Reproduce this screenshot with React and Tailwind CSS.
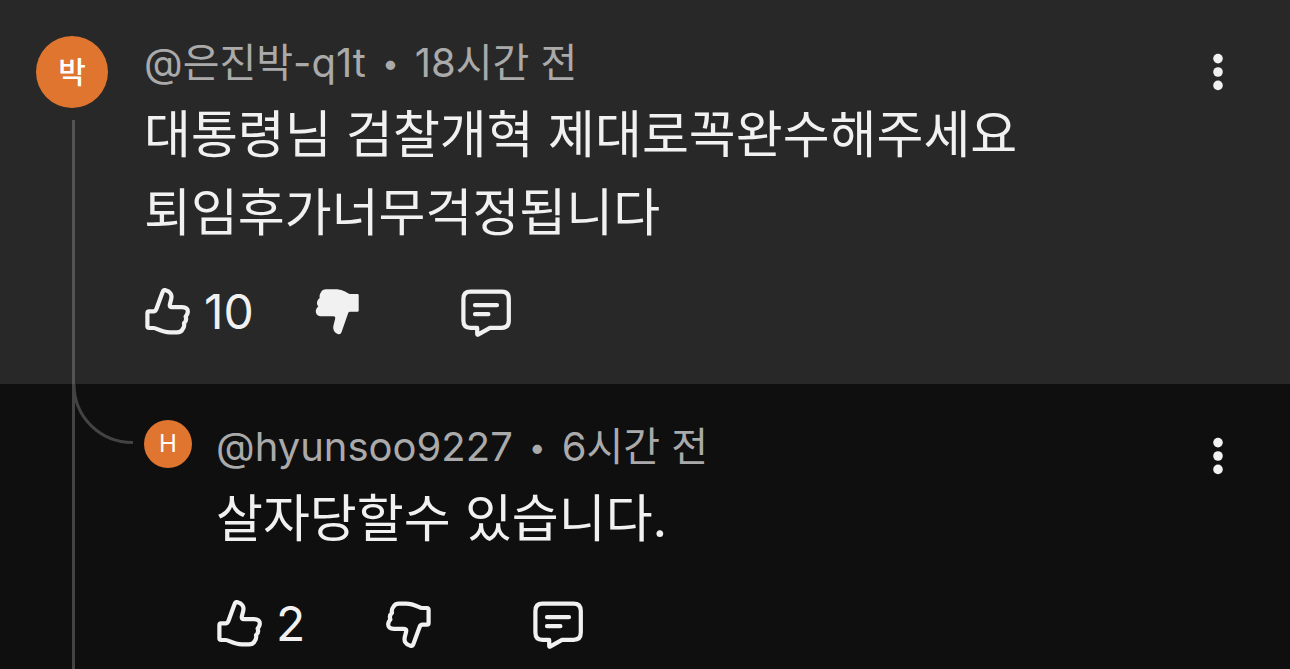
const comments = [
  {
    id: 1,
    initial: '박',
    author: '@은진박-q1t',
    time: '18시간 전',
    lines: ['대통령님 검찰개혁 제대로꼭완수해주세요', '퇴임후가너무걱정됩니다'],
    likes: 10,
    disliked: true,
  },
  {
    id: 2,
    initial: 'H',
    author: '@hyunsoo9227',
    time: '6시간 전',
    lines: ['살자당할수 있습니다.'],
    likes: 2,
    disliked: false,
  },
]

function ThumbIcon({ down = false }) {
  return (
    <svg
      className={`size-12 shrink-0 ${down ? 'rotate-180' : ''}`}
      viewBox="0 0 48 48"
      fill="none"
      stroke="currentColor"
      strokeWidth="4.2"
      strokeLinejoin="round"
      aria-hidden="true"
    >
      <path d="M5 23.3H9.5Q11.6 23.3 12.4 21L18.6 4Q19.4 1.6 21.6 2.2C26.4 3.4 28.2 7 27.2 11L25.9 16.2Q25.2 19.2 28 19.2H38C42 19.2 44 21 43.8 24C43.6 26.4 42.8 27.2 41.6 28.6C42.6 31.2 42 33.6 40 35.2C40.6 37.4 40 39.4 38.6 41.2C37.4 43.6 35.6 44.4 33 44.4H26C21 44.4 17.4 43 13.4 41.2Q11.6 40 9.6 40H5Q3.4 40 3.4 38.4V25Q3.4 23.3 5 23.3Z" />
    </svg>
  )
}

function ThumbDownFilledIcon() {
  return (
    <svg className="size-12 shrink-0" viewBox="0 0 48 48" fill="currentColor" aria-hidden="true">
      <path d="M14 1.3H23C30 1.3 33 3.6 36.500 5.4Q37.8 6 39 6H45.500Q46.7 6 46.7 7.2V22.4Q46.7 23.7 45.500 23.7H38Q36.7 23.7 36.2 25L29.6 44Q28.8 46.600 26.6 46.3C22.6 45.2 20.6 41.8 21.4 37.8L23.1 31Q23.8 28.3 21.4 28.3H9.500C6 28.3 3.8 26.3 3.8 23.3C3.8 21.2 4.700 19.900 6.3 18.4C4.3 16 4.5 12.4 7.700 9.900C7.200 7.900 7.8 6 9 4.200C10 2.200 11.600 1.3 14 1.3Z" />
    </svg>
  )
}

function ReplyIcon() {
  return (
    <svg
      className="h-[50px] w-[52px]"
      viewBox="0 0 52 50"
      fill="none"
      stroke="currentColor"
      strokeWidth="4.2"
      strokeLinecap="round"
      strokeLinejoin="round"
      aria-hidden="true"
    >
      <path d="M10.5 3.6H41.5Q48.8 3.6 48.8 10.9V32.6Q48.8 39.9 41.5 39.9H30L18 46.6Q17.2 46.8 17.2 46V39.9H10.5Q3.4 39.9 3.4 32.6V10.9Q3.4 3.6 10.5 3.6Z" />
      <path d="M15 17.2H37M15 26.2H28.4" />
    </svg>
  )
}

function Avatar({ initial, small = false }) {
  return (
    <div
      className={`flex shrink-0 items-center justify-center rounded-full bg-[#df752f] text-white ${
        small ? 'size-12 text-2xl' : 'size-[72px] text-3xl font-medium'
      }`}
    >
      {initial}
    </div>
  )
}

function MenuButton() {
  return (
    <button type="button" aria-label="메뉴" className="flex h-[72px] w-12 shrink-0 items-center justify-center">
      <svg className="h-10 w-3" viewBox="0 0 12 40" fill="currentColor" aria-hidden="true">
        <circle cx="6" cy="6.6" r="4.8" />
        <circle cx="6" cy="20" r="4.8" />
        <circle cx="6" cy="33.4" r="4.8" />
      </svg>
    </button>
  )
}

function CommentContent({ comment, reply = false }) {
  return (
    <div className="min-w-0 flex-1">
      <p className="flex items-center gap-4 text-[40px] leading-[54px] text-[#aaaaaa]">
        <span>{comment.author}</span>
        <span className="text-3xl">•</span>
        <span>{comment.time}</span>
      </p>
      <p className="mt-1.5 text-[51px] leading-[78px]">
        {comment.lines.map(line => (
          <span key={line} className="block">{line}</span>
        ))}
      </p>
      <div className={`grid grid-cols-[168px_148px_auto] justify-start ${reply ? 'mt-[42px]' : 'mt-9'}`}>
        <button type="button" aria-label={`좋아요 ${comment.likes}`} className="flex h-12 items-center gap-3">
          <ThumbIcon />
          <span className="text-5xl leading-[50px]">{comment.likes}</span>
        </button>
        <button type="button" aria-label="싫어요" aria-pressed={comment.disliked} className="flex h-12 items-center">
          {comment.disliked ? <ThumbDownFilledIcon /> : <ThumbIcon down />}
        </button>
        <button type="button" aria-label="답글" className="flex h-12 items-start">
          <ReplyIcon />
        </button>
      </div>
    </div>
  )
}

export default function App() {
  const [parent, reply] = comments

  return (
    <main className="flex min-h-screen flex-col bg-[#0f0f0f] font-['Inter','Noto_Sans_CJK_KR',sans-serif] text-[#f1f1f1]">
      <article className="flex bg-[#282828] pr-12 pl-9">
        <div className="mr-9 flex flex-col items-center pt-9">
          <Avatar initial={parent.initial} />
          {/* thread line */}
          <div className="mt-3 ml-[3px] w-[3px] flex-1 bg-[#535353]" />
        </div>
        <div className="flex min-w-0 flex-1 pt-9 pb-12">
          <CommentContent comment={parent} />
          <MenuButton />
        </div>
      </article>

      <article className="flex flex-1 pr-12 pl-[72px]">
        <div className="w-[72px] shrink-0 border-l-[3px] border-[#434343]">
          <svg className="h-[61px] w-[59px] overflow-visible text-[#434343]" viewBox="0 0 59 61" fill="none" stroke="currentColor" strokeWidth="3" aria-hidden="true">
            <path d="M-1 0C-1 33 25 58.5 58 58.5" />
          </svg>
        </div>
        <div className="flex min-w-0 flex-1 gap-6 pt-9">
          <Avatar initial={reply.initial} small />
          <CommentContent comment={reply} reply />
          <MenuButton />
        </div>
      </article>
    </main>
  )
}
